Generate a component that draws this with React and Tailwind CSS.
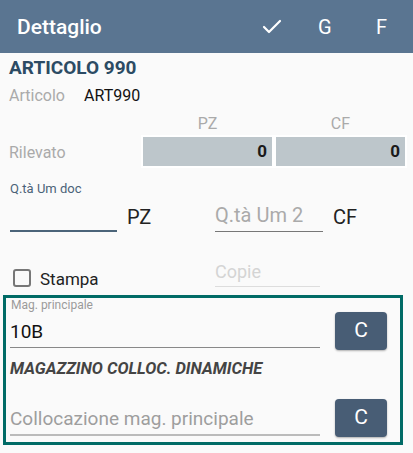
import { Check } from 'lucide-react'

function Header() {
  return (
    <div className="h-[53px] bg-[#5a7591] flex items-center pl-[17px] text-white">
      <div className="flex-1 text-[21px] font-medium leading-[24px]">Dettaglio</div>
      <div className="flex items-center">
        <Check className="w-[24px] h-[24px] mr-[34px]" strokeWidth={2.2} />
        <span className="text-[20px] w-[58px] leading-[24px]">G</span>
        <span className="text-[20px] w-[37px] leading-[24px]">F</span>
      </div>
    </div>
  )
}

function QtyBox({ value }) {
  return (
    <div className="w-[129px] h-[29px] bg-[#bdc6cb] flex items-center justify-end pr-[5px] text-[17px] font-bold text-[#1a1a1a]">
      {value}
    </div>
  )
}

function CButton() {
  return (
    <button className="w-[52px] h-[38px] ml-[15px] rounded-[4px] bg-[#485d75] text-white text-[21px] shadow-[0_1px_2px_rgba(0,0,0,0.3)] flex items-center justify-center">
      C
    </button>
  )
}

export default function App() {
  return (
    <div className="w-[413px] h-[453px] bg-[#fafafa] overflow-hidden font-['Roboto',sans-serif]">
      <Header />

      <div className="h-[31px] px-[9px] flex items-center text-[19px] font-bold text-[#2c4b64]">
        ARTICOLO 990
      </div>
      <div className="h-[24px] px-[9px] flex items-center text-[16px]">
        <span className="text-[#aaaaaa] w-[75px]">Articolo</span>
        <span className="text-[#111]">ART990</span>
      </div>

      <div className="h-[27px] pt-[7px] flex text-[16px] leading-[17px] text-[#aaaaaa]">
        <div className="ml-[143px] w-[129px] text-center">PZ</div>
        <div className="ml-[4px] w-[129px] text-center">CF</div>
      </div>
      <div className="h-[33px] flex items-center">
        <div className="flex-1 pl-[9px] pt-[2px] text-[16px] text-[#aaaaaa]">Rilevato</div>
        <div className="flex gap-[4px] p-[2px] bg-white mr-[6px]">
          <QtyBox value="0" />
          <QtyBox value="0" />
        </div>
      </div>

      <div className="flex h-[64px]">
        <div className="ml-[10px] w-[107px]">
          <div className="mt-[13px] text-[13px] leading-[15px] text-[#4a6278]">Q.tà Um doc</div>
          <div className="h-[36px] border-b-2 border-[#4b6479]"></div>
        </div>
        <div className="ml-[10px] w-[88px] self-end mb-[3px] text-[20px] leading-[24px] text-[#222]">PZ</div>
        <div className="w-[108px] self-end border-b border-[#777] pb-[4px] text-[20px] leading-[24px] text-[#aaaaaa]">
          Q.tà Um 2
        </div>
        <div className="ml-[10px] self-end mb-[3px] text-[20px] leading-[24px] text-[#222]">CF</div>
      </div>

      <div className="flex h-[63px]">
        <div className="w-[215px] pl-[13px] pt-[37px] flex items-start">
          <div className="w-[18px] h-[18px] border-2 border-[#777] rounded-[3px]"></div>
          <span className="ml-[9px] text-[17px] leading-[20px] text-[#222]">Stampa</span>
        </div>
        <div className="mt-[26px] w-[105px] h-[29px] border-b border-[#dddddd] pt-[2px] text-[18px] leading-[24px] text-[#d4d4d4]">
          Copie
        </div>
      </div>

      <div className="mx-[3px] w-[400px] h-[150px] border-[3px] border-[#006b66] pl-[4px] pb-[5px]">
        <div className="pl-[1px] text-[12px] leading-[14px] text-[#9a9a9a]">Mag. principale</div>
        <div className="flex">
          <div className="w-[310px] h-[36px] border-b border-[#888] pt-[8px] text-[19px] leading-[24px] text-[#111]">10B</div>
          <CButton />
        </div>
        <div className="mt-[10px] text-[16.5px] leading-[18px] font-bold italic text-[#444]">
          MAGAZZINO COLLOC. DINAMICHE
        </div>
        <div className="flex mt-[21px]">
          <div className="w-[310px] h-[37px] border-b-2 border-[#bbbbbb] pt-[8px] text-[19px] leading-[24px] text-[#9e9e9e]">
            Collocazione mag. principale
          </div>
          <CButton />
        </div>
      </div>
    </div>
  )
}
